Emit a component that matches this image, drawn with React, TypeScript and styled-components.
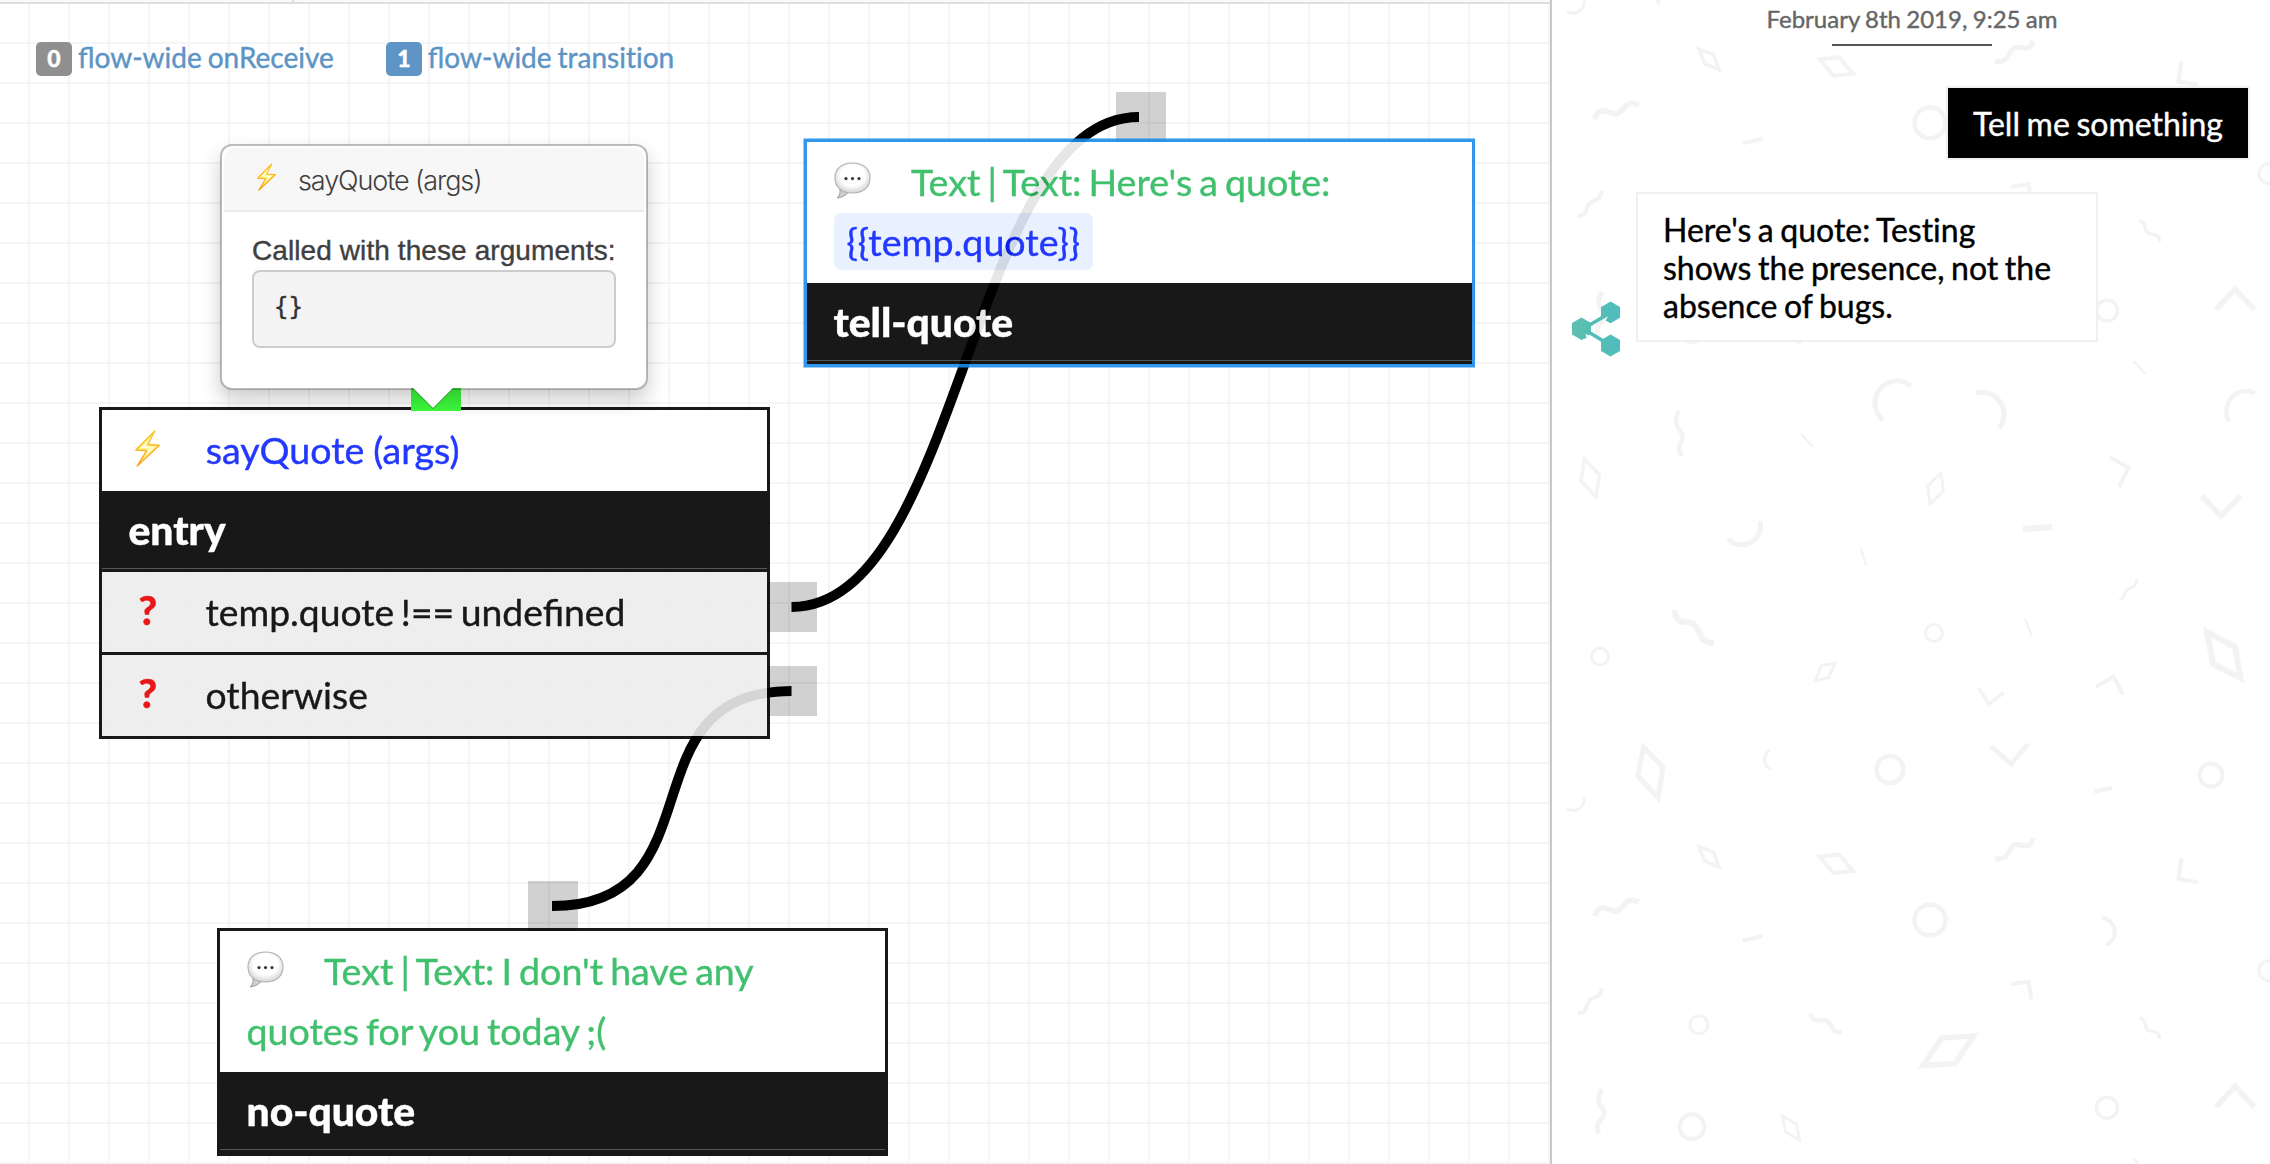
import React from "react";
import styled, { createGlobalStyle, css } from "styled-components";

const GlobalStyle = createGlobalStyle`
  *, *::before, *::after { box-sizing: border-box; }
  body { margin: 0; background: #fff; overflow: hidden; }
`;

const lato = `Lato, "Open Sans", sans-serif`;

/* ---------- Layout ---------- */

const Shell = styled.div`
  display: flex;
  width: 2270px;
  height: 1164px;
  overflow: hidden;
  font-family: ${lato};
  background: #fff;
  -webkit-text-stroke-width: 0.4px;
`;

const Editor = styled.main`
  display: flex;
  flex-direction: column;
  width: 1550px;
  flex: none;
`;

const TabStrip = styled.div`
  display: flex;
  height: 4px;
  flex: none;
  background: #fafafa;
  border-bottom: 2px solid #dedede;
`;

const Tab = styled.div`
  width: 294px;
  border-right: 2px solid #dedede;
`;

const Canvas = styled.section`
  position: relative;
  flex: 1;
  background-color: #fff;
  background-image: linear-gradient(#f5f5f5 2px, transparent 2px),
    linear-gradient(90deg, #f5f5f5 2px, transparent 2px);
  background-size: 40px 40px;
  background-position: 28px 38px;
`;

/* ---------- Flow-wide links ---------- */

const FlowLinks = styled.nav`
  display: flex;
  gap: 52px;
  padding: 36px 0 0 36px;
`;

const FlowLink = styled.a`
  display: flex;
  align-items: center;
  gap: 6px;
  height: 37px;
  padding-bottom: 2px;
  font-size: 28px;
  line-height: 35px;
  word-spacing: -1.2px;
  color: #5c94c5;
  white-space: nowrap;
`;

const Count = styled.span<{ $active?: boolean }>`
  width: 36px;
  height: 34px;
  margin-top: 2px;
  border-radius: 5px;
  background: ${(p) => (p.$active ? "#5f94c6" : "#8f8f8f")};
  color: #fff;
  font-size: 23px;
  font-weight: 900;
  line-height: 33px;
  text-align: center;
`;

const LinkLabel = styled.span`
  white-space: pre;
`;

const Unligated = styled.span`
  font-variant-ligatures: none;
`;

/* ---------- Diagram ---------- */

const Port = styled.div<{ $x: number; $y: number; $hot?: boolean }>`
  position: absolute;
  left: ${(p) => p.$x}px;
  top: ${(p) => p.$y}px;
  width: 50px;
  height: 50px;
  background: ${(p) => (p.$hot ? "#3cfa3c" : "rgba(0, 0, 0, 0.18)")};
`;

const Wires = styled.svg`
  position: absolute;
  inset: 0;
  width: 100%;
  height: 100%;
  pointer-events: none;
`;

const Node = styled.article<{ $x: number; $y: number; $selected?: boolean }>`
  position: absolute;
  left: ${(p) => p.$x}px;
  top: ${(p) => p.$y}px;
  width: 671px;
  border: 3px solid ${(p) => (p.$selected ? "#1b8bec" : "#000")};
  ${(p) => p.$selected && css`box-shadow: 0 0 0 0.5px #1b8bec;`}
  background: #fff;
  opacity: 0.9;
  font-size: 37.6px;
  line-height: 60px;
  word-spacing: -2.6px;
`;

const NodeBody = styled.div<{ $tone: "say" | "action" }>`
  padding: 10px 27px 11px;
  color: ${(p) => (p.$tone === "say" ? "#2dba5f" : "#0b23ff")};
  ${(p) => p.$tone === "action" && css`word-spacing: -0.8px;`}
`;

const NodeName = styled.h2`
  margin: 0;
  height: 78px;
  padding: 9px 27px 0;
  background: #000;
  border-bottom: 1px solid #444;
  color: #fff;
  font-size: 40.8px;
  font-weight: 900;
`;

const NodeFoot = styled.div`
  height: 3px;
  background: #000;
`;

const Condition = styled.div<{ $height: number }>`
  display: flex;
  height: ${(p) => p.$height}px;
  padding: 10px 27px 0 0;
  border-top: 3px solid #000;
  background: #ededed;
  color: #000;
  font-size: 37.3px;
  word-spacing: -3px;
`;

const Question = styled.span`
  width: 104px;
  padding-left: 37px;
  color: #e60000;
  font-weight: 900;
  font-size: 40px;
  line-height: 56px;
`;

const Variable = styled.span`
  padding: 6px 13px;
  border-radius: 7px;
  background: #e7f0ff;
  color: #0b23ff;
`;

const IconSlot = styled.span<{ $indent: number; $gap: number }>`
  display: inline-block;
  margin-left: ${(p) => p.$indent}px;
  margin-right: ${(p) => p.$gap}px;
  line-height: 0;
  vertical-align: -3px;
`;

/* ---------- Popover ---------- */

const Popover = styled.aside`
  position: absolute;
  left: 220px;
  top: 140px;
  width: 428px;
  height: 246px;
  padding: 2px;
  border: 2px solid rgba(0, 0, 0, 0.25);
  border-radius: 12px;
  background: #fff;
  background-clip: padding-box;
  box-shadow: 0 10px 20px rgba(0, 0, 0, 0.2);
  color: #3f3f3f;

  &::after {
    content: "";
    position: absolute;
    left: 190px;
    top: 241px;
    border: 21px solid transparent;
    border-top-color: #fff;
    border-bottom-width: 0;
    filter: drop-shadow(0 1px 0 rgba(0, 60, 0, 0.5));
  }
`;

const PopTitle = styled.header`
  display: flex;
  height: 64px;
  padding: 15px 32px 0 33px;
  border-bottom: 2px solid #ebebeb;
  border-radius: 10px 10px 0 0;
  background: #f7f7f7;
`;

const PopTitleText = styled.span`
  margin-left: 22px;
  font-family: Inter, "Liberation Sans", sans-serif;
  font-weight: 300;
  font-size: 27px;
  line-height: 36px;
  letter-spacing: -1.1px;
  -webkit-text-stroke-width: 0;
`;

const PopBody = styled.div`
  padding: 20px 28px;
  font-family: "Liberation Sans", Arial, sans-serif;
  font-size: 28px;
  line-height: 38px;
  letter-spacing: 0.09px;
  white-space: nowrap;
`;

const Code = styled.pre`
  margin: 0;
  height: 78px;
  padding: 18px 20px;
  border: 2px solid #ccc;
  border-radius: 8px;
  background: #f4f4f4;
  color: #333;
  font-family: "DejaVu Sans Mono", monospace;
  font-size: 24px;
  line-height: 34px;
`;

/* ---------- Chat ---------- */

const Chat = styled.section`
  position: relative;
  display: flex;
  flex-direction: column;
  flex: 1;
  border-left: 2px solid #c8c8c8;
  background: #fff;
`;

const Confetti = styled.svg`
  position: absolute;
  inset: 0;
  width: 100%;
  height: 100%;
  stroke: #f3f3f3;
  fill: none;
`;

const Conversation = styled.div`
  position: relative;
  display: flex;
  flex-direction: column;
  padding: 0 20px;
  font-variant-ligatures: none;
`;

const DateLine = styled.time`
  display: flex;
  flex-direction: column;
  align-items: center;
  height: 86px;
  padding: 3px 0 0 2px;
  color: #666;
  font-size: 24px;
  line-height: 32px;
  word-spacing: -0.8px;

  &::after {
    content: "";
    width: 160px;
    height: 2px;
    margin-top: 9px;
    background: #555;
  }
`;

const Message = styled.div<{ $mine?: boolean }>`
  display: flex;
  justify-content: ${(p) => (p.$mine ? "flex-end" : "flex-start")};
  align-items: flex-end;
  margin-bottom: 32px;
`;

const Bubble = styled.div<{ $mine?: boolean }>`
  padding: 17px 25px 15px;
  border: 2px solid #f0f0f0;
  background: ${(p) => (p.$mine ? "#000" : "#fff")};
  background-clip: padding-box;
  color: ${(p) => (p.$mine ? "#fff" : "#000")};
  font-size: 32px;
  line-height: 38px;
  word-spacing: -1.6px;
  ${(p) =>
    !p.$mine &&
    css`
      width: 462px;
      padding-right: 40px;
      margin-left: 16px;
    `}
`;

const Avatar = styled.div`
  width: 48px;
  height: 56px;
  margin-bottom: -15px;
`;

/* ---------- Icons ---------- */

const Bolt = ({ size }: { size: number }) => (
  <svg width={size * 0.68} height={size} viewBox="0 0 25 37" overflow="visible">
    <defs>
      <linearGradient id="bolt" x1="0" y1="0" x2="0" y2="1">
        <stop offset="0" stopColor="#fbc21c" />
        <stop offset="1" stopColor="#fb9a1c" />
      </linearGradient>
    </defs>
    <path d="M19.6 1 L0.8 20 L11.5 20.8 L2.2 36 L24.3 15.2 L12.6 14.6 Z" fill="#fff36b" stroke="url(#bolt)" strokeWidth="1.5" strokeLinejoin="round" />
    <path d="M15.5 8 L5.5 17.8 L14.6 18.4 L9.5 26.5 L19.6 17 L10.2 16.4 Z" fill="#fffce0" />
  </svg>
);

const Speech = () => (
  <svg width="37" height="37" viewBox="0 0 37 37">
    <defs>
      <radialGradient id="puff" cx="0.5" cy="0.42" r="0.58">
        <stop offset="0.6" stopColor="#fff" />
        <stop offset="1" stopColor="#cfcfcf" />
      </radialGradient>
    </defs>
    <path d="M5.5 26 C7 30 5.5 33 3.4 36 C8 35.5 11.5 33.5 14 30.6" fill="#c9c9c9" stroke="#909090" strokeWidth="1" />
    <path d="M18.5 1 C29 1 36 6.5 36 16 C36 25.5 29 31 18.5 31 C8 31 1 25.5 1 16 C1 6.5 8 1 18.5 1 Z" fill="url(#puff)" stroke="#a8a8a8" strokeWidth="1.1" />
    <circle cx="12" cy="16.6" r="1.6" fill="#222" />
    <circle cx="18.5" cy="16.6" r="1.6" fill="#222" />
    <circle cx="25" cy="16.6" r="1.6" fill="#222" />
  </svg>
);

const ShareMark = () => (
  <svg width="48" height="56" viewBox="0 0 48 56">
    <defs>
      <linearGradient id="teal" gradientUnits="userSpaceOnUse" x1="0" y1="0" x2="48" y2="0">
        <stop offset="0" stopColor="#5dbfae" />
        <stop offset="1" stopColor="#4fbcbd" />
      </linearGradient>
    </defs>
    <g fill="url(#teal)">
      <path d="M9.5 16.5 L19 22 V33 L16 34.5 L13.5 32.5 L14.5 37 L9.5 39 L0 33.5 V22 Z" />
      <path d="M38.5 0.5 L48 6 V16.8 L38.5 22.2 L33.5 19.5 L36 15.5 L31 17 L29 16.5 V6 Z" />
      <path d="M38.5 33.5 L48 39 V50 L38.5 55.5 L29 50 V39 Z" />
    </g>
    <path d="M16 25 L37 12.5 M13 29 L33 41" stroke="#52bdb6" strokeWidth="3.6" fill="none" />
  </svg>
);

/* ---------- Chat wallpaper ---------- */

const TILE = 797.3;

const strokes: [string, number][] = [
  ["M359 386 A22 22 0 0 0 331 420", 5],
  ["M424 393 A22 22 0 0 1 447 428", 5],
  ["M703 393 A20 20 0 0 0 677 421", 4.5],
  ["M127 411 C120 424 127 428 130 434 C134 442 122 444 130 456", 4.5],
  ["M249 434 L261 447", 2.5],
  ["M32.5 459 L47.5 474.5 L44 497 L29 481 Z", 3.5],
  ["M389 473 L391.5 491 L378 504 L375.5 486 Z", 3],
  ["M558 457.5 L576.5 467.7 L567 487", 4],
  ["M650 496 L669 516 L688.5 496", 5.5],
  ["M176 539 A19 19 0 0 0 208 521", 5],
  ["M309 549 L314 565", 2.5],
  ["M471 529 L500 527", 6],
  ["M585 579 C584 590 577 586 574 591 C571 596 574 598 567 600", 3],
  ["M122.5 610 C124 626 134 621 140 623 C150 628 144 643 162 643", 6],
  ["M473 619 L480 635.5", 2.5],
  ["M283 663.5 L276.5 677.5 L263 681 L269.5 665.5 Z", 3],
  ["M426.5 688 L437 704 L452 692.5", 3.5],
  ["M544 687 L561.5 676.5 L571 694.5", 4],
  ["M655 632 L683 647 L688.5 678 L661 664 Z", 6],
  ["M91.5 747 L111 767.5 L106 797.5 L86 776 Z", 5],
  ["M218 750 A11 11 0 0 0 219 769.5", 3],
  ["M439 746 L459 764 L476 744", 5],
  ["M542 791.5 L560.5 788", 4],
  ["M15 808.5 A11 11 0 0 0 32 797.5", 3],
  ["M147 846.5 L161.5 852 L167 867 L152.5 861 Z", 3.5],
  ["M267.5 856.5 L287 854.5 L301 871 L281.5 873 Z", 4],
  ["M481 838 C478 852 468 842 462 845 C455 850 458 860 443 859", 5],
  ["M629.5 858 L626.5 879 L646 882", 4],
  ["M42.5 916 C49 900 58 913 65 911 C75 907 72 896 87 902", 5.5],
  ["M190.5 940.7 L210.5 936", 4],
  ["M550 918 A14 14 0 0 1 554 945", 4],
  ["M459 984 L476.5 981.5 L479.5 999.5", 4],
  ["M50 988 C48 1000 41 996 37 1001 C33 1007 36 1013 26 1013", 4],
  ["M258 1013 C261 1025 270 1018 275 1021 C282 1026 279 1034 290 1032", 4.5],
  ["M390 1038 L421.5 1036 L403 1063.5 L371 1065.5 Z", 5.5],
  ["M587 1018 C596 1020 591 1027 596 1030 C601 1033 606 1029 608 1039", 3.5],
  ["M50 1089 C42 1104 50 1105 52 1111 C55 1118 40 1122 47 1134", 5],
  ["M230.5 1116 L244.5 1124.5 L247.5 1140 L233.5 1132 Z", 3],
  ["M664 1107 L683 1086.5 L702.5 1107", 5.5],
  ["M581.5 361 L593.5 374", 2.5],
];

const rings: [number, number, number, number][] = [
  [382, 633, 8.5, 3],
  [48, 656.7, 8.5, 3],
  [338, 769.5, 13.5, 4.5],
  [659, 775, 11.5, 4],
  [378, 920, 15.5, 4.5],
  [717, 970.7, 10, 3],
  [147, 1024.7, 9, 3],
  [140, 1126.7, 12.5, 4],
  [555, 1107.7, 10.5, 3.5],
];

const Wallpaper = () => (
  <Confetti>
    {[-TILE, 0, TILE].map((dy) => (
      <g key={dy} transform={`translate(0 ${dy})`}>
        {strokes.map(([d, w]) => (
          <path key={d} d={d} strokeWidth={w} />
        ))}
        {rings.map(([cx, cy, r, w]) => (
          <circle key={`${cx}-${cy}`} cx={cx} cy={cy} r={r} strokeWidth={w} />
        ))}
      </g>
    ))}
  </Confetti>
);

/* ---------- Page ---------- */

export default function App() {
  return (
    <>
      <GlobalStyle />
      <Shell>
        <Editor>
          <TabStrip>
            <Tab />
          </TabStrip>
          <Canvas>
            <FlowLinks>
              <FlowLink>
                <Count>0</Count>
                <LinkLabel>flow-wide onReceive</LinkLabel>
              </FlowLink>
              <FlowLink>
                <Count $active>1</Count>
                <LinkLabel>
                  flow-wide <Unligated>transition</Unligated>
                </LinkLabel>
              </FlowLink>
            </FlowLinks>

            <Port $x={1116} $y={88} />
            <Port $x={767} $y={578} />
            <Port $x={767} $y={662} />
            <Port $x={528} $y={877} />

            <Wires fill="none" stroke="#000" strokeWidth="10">
              <path d="M791.5 603 C961.5 603 969 113 1139 113" />
              <path d="M791.5 687 C621.5 687 722 902 552 902" />
            </Wires>

            <Node $x={98.5} $y={403}>
              <NodeBody $tone="action">
                <IconSlot $indent={6} $gap={46}>
                  <Bolt size={37} />
                </IconSlot>
                sayQuote (args)
              </NodeBody>
              <NodeName>entry</NodeName>
              <Condition $height={83}>
                <Question>?</Question>temp.quote !== undefined
              </Condition>
              <Condition $height={84}>
                <Question>?</Question>otherwise
              </Condition>
            </Node>
            <Port $x={411} $y={357} $hot />

            <Node $x={803.5} $y={135} $selected>
              <NodeBody $tone="say">
                <IconSlot $indent={0} $gap={40.5}>
                  <Speech />
                </IconSlot>
                Text | Text: Here's a quote:
                <br />
                <Variable>{"{{temp.quote}}"}</Variable>
              </NodeBody>
              <NodeName>tell-quote</NodeName>
              <NodeFoot />
            </Node>

            <Node $x={216.5} $y={923.5}>
              <NodeBody $tone="say">
                <IconSlot $indent={0} $gap={40.5}>
                  <Speech />
                </IconSlot>
                Text | Text: I don't have any
                <br />
                quotes for you today ;(
              </NodeBody>
              <NodeName>no-quote</NodeName>
              <NodeFoot />
            </Node>

            <Popover>
              <PopTitle>
                <Bolt size={28} />
                <PopTitleText>sayQuote (args)</PopTitleText>
              </PopTitle>
              <PopBody>
                Called with these arguments:
                <Code>{"{}"}</Code>
              </PopBody>
            </Popover>
          </Canvas>
        </Editor>

        <Chat>
          <Wallpaper />
          <Conversation>
            <DateLine>February 8th 2019, 9:25 am</DateLine>
            <Message $mine>
              <Bubble $mine>Tell me something</Bubble>
            </Message>
            <Message>
              <Avatar>
                <ShareMark />
              </Avatar>
              <Bubble>Here's a quote: Testing shows the presence, not the absence of bugs.</Bubble>
            </Message>
          </Conversation>
        </Chat>
      </Shell>
    </>
  );
}
